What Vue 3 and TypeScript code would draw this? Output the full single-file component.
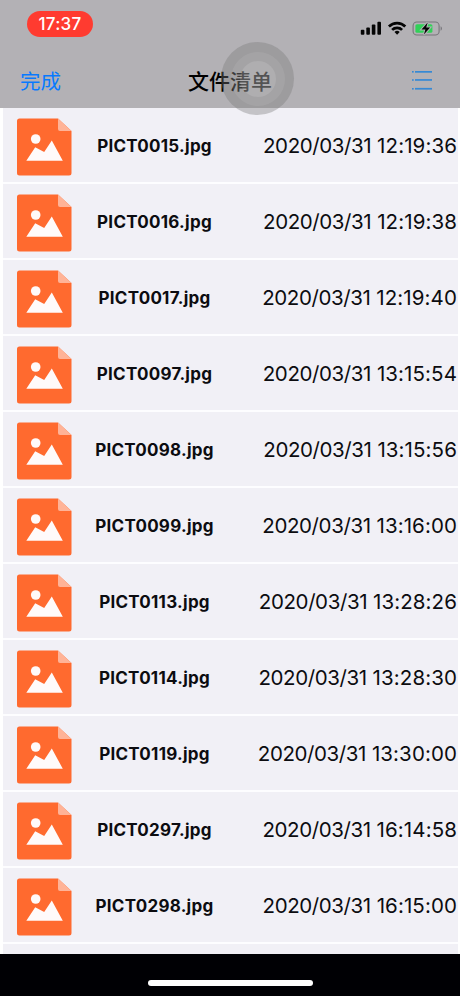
<script setup lang="ts">
interface FileEntry {
  name: string
  date: string
  time: string
}

const files: FileEntry[] = [
  { name: 'PICT0015.jpg', date: '2020/03/31', time: '12:19:36' },
  { name: 'PICT0016.jpg', date: '2020/03/31', time: '12:19:38' },
  { name: 'PICT0017.jpg', date: '2020/03/31', time: '12:19:40' },
  { name: 'PICT0097.jpg', date: '2020/03/31', time: '13:15:54' },
  { name: 'PICT0098.jpg', date: '2020/03/31', time: '13:15:56' },
  { name: 'PICT0099.jpg', date: '2020/03/31', time: '13:16:00' },
  { name: 'PICT0113.jpg', date: '2020/03/31', time: '13:28:26' },
  { name: 'PICT0114.jpg', date: '2020/03/31', time: '13:28:30' },
  { name: 'PICT0119.jpg', date: '2020/03/31', time: '13:30:00' },
  { name: 'PICT0297.jpg', date: '2020/03/31', time: '16:14:58' },
  { name: 'PICT0298.jpg', date: '2020/03/31', time: '16:15:00' },
]
</script>

<template>
  <div class="screen">
    <header class="header">
      <div class="status">
        <span class="clock">17:37</span>
        <svg class="indicators" width="82" height="18" viewBox="0 0 82 18">
          <g fill="#050505">
            <rect x="0.8" y="11.8" width="3.6" height="4.9" rx="0.9" />
            <rect x="6.3" y="9.6" width="3.6" height="7.1" rx="0.9" />
            <rect x="11.8" y="6.6" width="3.6" height="10.1" rx="0.9" />
            <rect x="17.4" y="3.8" width="3.6" height="12.9" rx="0.9" />
          </g>
          <g fill="none" stroke="#050505" stroke-width="2.7">
            <path d="M28.9 8.5a11.6 11.6 0 0 1 16.4 0" />
            <path d="M32.1 11.9a7.1 7.1 0 0 1 10 0" />
          </g>
          <path d="M34.5 14a3.8 3.8 0 0 1 5.2 0L37.1 16.8z" fill="#050505" />
          <rect x="53.1" y="4" width="26" height="13" rx="3.8" fill="none" stroke="#77757a" stroke-width="1.1" />
          <rect x="55.4" y="6.2" width="17" height="8.6" rx="1.6" fill="#31d158" />
          <path d="M80.6 8.2v4.6q1.3-.6 1.3-2.3t-1.3-2.3z" fill="#77757a" />
          <path d="M67.7 4.5l-6.2 6.9h3.9l-1.5 5.1 6.2-7h-3.9z" fill="#050505" stroke="#b3b1b5" stroke-width="2" paint-order="stroke" />
        </svg>
      </div>
      <nav class="nav">
        <span class="done">完成</span>
        <h1 class="title">文件清单</h1>
        <svg class="menu" width="21" height="20" viewBox="0 0 21 20" fill="#3689d5">
          <rect x="0" y="1" width="1.7" height="1.6" />
          <rect x="3" y="1" width="17" height="1.7" />
          <rect x="0" y="9.2" width="1.7" height="1.6" />
          <rect x="3" y="9.1" width="17" height="1.7" />
          <rect x="0" y="18" width="1.7" height="1.6" />
          <rect x="3" y="17.9" width="17" height="1.7" />
        </svg>
      </nav>
      <div class="touch"><div class="ring"><div class="core"></div></div></div>
    </header>

    <main class="list">
      <div v-for="file in files" :key="file.name" class="row">
        <svg class="icon" width="55" height="58" viewBox="0 0 55 58">
          <path d="M2.5 0.5H41L54.5 13V55a2.5 2.5 0 0 1-2.5 2.5H2.5A2.5 2.5 0 0 1 0 55V3A2.5 2.5 0 0 1 2.5 0.5z" fill="#ff6a2f" />
          <path d="M41 0.5L54.5 13H43a2 2 0 0 1-2-2z" fill="#ffb397" />
          <circle cx="18.7" cy="21" r="4.8" fill="#fffafa" />
          <path d="M9.3 42.8L18.2 29.2 27.2 34 34.8 22.5 45.8 42.8z" fill="#fffafa" />
        </svg>
        <span class="name">{{ file.name }}</span>
        <time class="stamp"><span class="date">{{ file.date }}</span> {{ file.time }}</time>
      </div>
      <div class="row"></div>
    </main>

    <footer class="footer"><div class="home"></div></footer>
  </div>
</template>

<style>
body {
  background: #fff;
}
</style>

<style scoped>
.screen {
  display: flex;
  flex-direction: column;
  width: 460px;
  height: 996px;
  overflow: hidden;
  font-family: Inter, "Noto Sans CJK SC", sans-serif;
  color: #0c0c10;
}
.header {
  position: relative;
  z-index: 1;
  flex: none;
  height: 108px;
  background: #b3b1b5;
}
.status {
  display: flex;
  justify-content: space-between;
  height: 54px;
  padding: 11px 18px 0 27px;
  box-sizing: border-box;
}
.clock {
  width: 66px;
  height: 26px;
  border-radius: 13px;
  background: #ff3b30;
  color: #fff;
  font-size: 17px;
  font-weight: 500;
  letter-spacing: 0.25px;
  line-height: 26px;
  text-align: center;
}
.indicators {
  margin-top: 7px;
}
.nav {
  display: grid;
  grid-template-columns: 1fr auto 1fr;
  align-items: center;
  height: 54px;
  padding: 0 27px 0 20px;
}
.done {
  padding-top: 2px;
  color: #087aff;
  font-size: 20.5px;
  line-height: 30px;
}
.title {
  margin: 0;
  padding: 2px 0 0 7px;
  color: #000;
  font-size: 21px;
  font-weight: 500;
  line-height: 30px;
}
.menu {
  justify-self: end;
  margin-bottom: 2px;
}
.touch {
  position: absolute;
  left: 221px;
  top: 42px;
  display: grid;
  place-items: center;
  width: 73px;
  height: 73px;
  border-radius: 50%;
  background: rgba(120, 120, 120, 0.37);
}
.ring {
  display: grid;
  place-items: center;
  width: 54px;
  height: 54px;
  border-radius: 50%;
  background: rgba(255, 255, 255, 0.08);
}
.core {
  width: 36px;
  height: 36px;
  border-radius: 50%;
  background: rgba(255, 255, 255, 0.12);
}
.list {
  flex: none;
  height: 846px;
  margin: 0 2px 0 3px;
  overflow: hidden;
  background: #f1f0f6;
}
.row {
  display: grid;
  grid-template-columns: 55px 1fr auto;
  align-items: center;
  height: 76px;
  padding: 0 1px 0 14px;
  box-sizing: border-box;
  border-bottom: 2px solid #fdfdff;
}
.icon {
  margin-top: 4px;
}
.name {
  justify-self: start;
  width: 165px;
  padding-top: 2px;
  text-align: center;
  font-size: 17px;
  font-weight: 650;
  letter-spacing: 0.26px;
  line-height: 24px;
}
.stamp {
  padding-top: 2px;
  font-size: 20.5px;
  letter-spacing: 0.1px;
  line-height: 28px;
  white-space: nowrap;
}
.date {
  letter-spacing: -0.4px;
}
.footer {
  display: flex;
  justify-content: center;
  flex: none;
  height: 42px;
  padding-top: 26px;
  box-sizing: border-box;
  background: #000004;
}
.home {
  width: 165px;
  height: 6px;
  border-radius: 3px;
  background: #fff;
}
</style>
